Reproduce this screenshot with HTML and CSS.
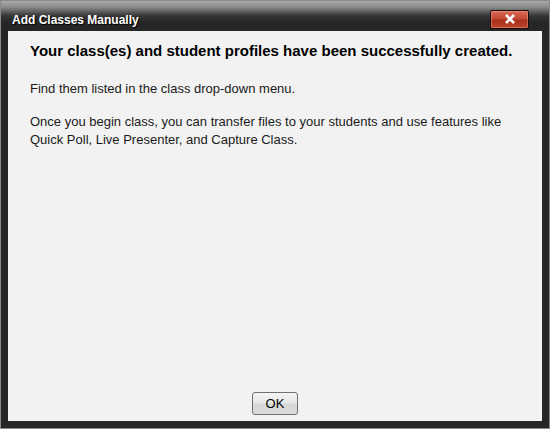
FILE: index.html
```html
<!DOCTYPE html>
<html>
<head>
<meta charset="utf-8">
<link rel="stylesheet" href="styles.css">
</head>
<body>
<div class="window">
  <div class="titlebar">
    <span class="title">Add Classes Manually</span>
    <button class="close" aria-label="Close">
      <svg width="12" height="10" viewBox="0 0 12 10"><path d="M2 1 L10 9 M10 1 L2 9" stroke="#fff" stroke-width="2.6" stroke-linecap="butt"/></svg>
    </button>
  </div>
  <div class="content">
    <h1 class="heading">Your class(es) and student profiles have been successfully created.</h1>
    <p class="text">Find them listed in the class drop-down menu.</p>
    <p class="text">Once you begin class, you can transfer files to your students and use features like Quick Poll, Live Presenter, and Capture Class.</p>
    <div class="spacer"></div>
    <div class="actions"><button class="ok">OK</button></div>
  </div>
</div>
</body>
</html>
```

FILE: styles.css
```css
html, body { margin: 0; padding: 0; }
body { width: 550px; height: 429px; overflow: hidden; font-family: "Liberation Sans", Arial, sans-serif; }
.window {
  box-sizing: border-box;
  width: 550px; height: 429px;
  border: 1px solid #8a8a8a;
  background: #262626;
  display: flex; flex-direction: column;
  padding: 0 7px 7px 7px;
}
.titlebar {
  height: 30px;
  margin: 0 -7px;
  padding: 0 20px 0 11px;
  display: flex; align-items: center; justify-content: space-between;
  background: linear-gradient(to bottom, #a9a9a9 0px, #8c8c8c 6px, #5a5a5a 11px, #353535 15px, #262626 22px, #262626 30px);
}
.title {
  color: #fff; font-weight: bold; font-size: 12px;
  text-shadow: 1px 1px 1px #000;
  margin-top: 8px;
}
.close {
  width: 39px; height: 19px; margin-top: 6px;
  border: 1px solid #1a0a08; border-radius: 2px;
  background: linear-gradient(to bottom, #d86a56 0%, #c24a34 45%, #a8301c 55%, #c0432c 100%);
  box-shadow: inset 0 0 0 1px rgba(255,200,180,0.35);
  padding: 0; display: flex; align-items: center; justify-content: center;
}
.content {
  flex: 1;
  background: #f2f2f2;
  display: flex; flex-direction: column;
  padding: 10px 22px 6px 22px;
}
.heading {
  margin: 0; font-size: 15px; font-weight: bold; color: #000; line-height: 20px;
}
.text {
  margin: 19px 0 0 0; font-size: 13px; color: #1a1a1a; line-height: 18px;
}
.text + .text { margin-top: 15px; }
.spacer { flex: 1; }
.actions { display: flex; justify-content: center; }
.ok {
  width: 46px; height: 23px;
  border: 1px solid #707070; border-radius: 3px;
  background: linear-gradient(to bottom, #f4f4f4 0%, #e8e8e8 45%, #d6d6d6 55%, #dddddd 100%);
  font-family: "Liberation Sans", Arial, sans-serif; font-size: 13px; color: #000;
  padding: 0;
}
```
